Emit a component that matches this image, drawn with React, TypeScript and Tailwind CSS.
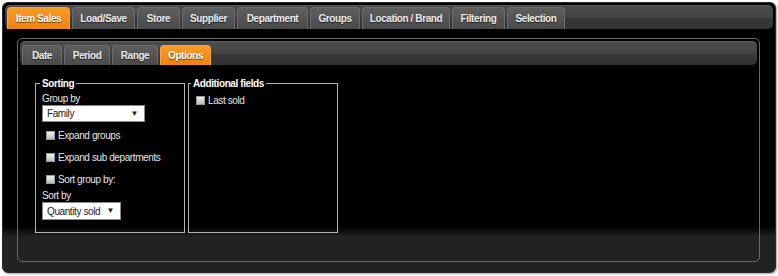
import React from 'react';

const mainTabs = [
  { label: 'Item Sales', w: 'w-[63px]', active: true },
  { label: 'Load/Save', w: 'w-[63px]' },
  { label: 'Store', w: 'w-[43px]' },
  { label: 'Supplier', w: 'w-[53px]' },
  { label: 'Department', w: 'w-[71px]' },
  { label: 'Groups', w: 'w-[50px]' },
  { label: 'Location / Brand', w: 'w-[88px]' },
  { label: 'Filtering', w: 'w-[53px]' },
  { label: 'Selection', w: 'w-[58px]' },
];

const subTabs = [
  { label: 'Date', w: 'w-[40px]' },
  { label: 'Period', w: 'w-[46px]' },
  { label: 'Range', w: 'w-[46px]' },
  { label: 'Options', w: 'w-[51px]', active: true },
];

function Tab({ label, w, active, h }: { label: string; w: string; active?: boolean; h: string }) {
  const look = active
    ? 'bg-[linear-gradient(to_bottom,#fa9a26,#ef8410)] border-[#f6a445] text-white'
    : 'bg-[linear-gradient(to_bottom,#5e5e5e,#4a4a4a)] border-[#6c6c6c] text-[#ececec]';
  return (
    <div
      className={`${w} ${h} ${look} flex items-center justify-center rounded-t-[4px] border border-b-0 text-[10px] font-bold tracking-[-0.4px] [text-shadow:0_1px_1px_rgba(0,0,0,0.6)]`}
    >
      {label}
    </div>
  );
}

function Check({ label }: { label: string }) {
  return (
    <div className="flex items-center h-[22px] pl-[4px]">
      <span className="w-[9px] h-[9px] bg-[linear-gradient(to_bottom,#f0f0f0,#bdbdbd)] border border-[#9a9a9a] mr-[3px]" />
      <span className="text-[#e6e6e6]">{label}</span>
    </div>
  );
}

function Select({ value, w }: { value: string; w: string }) {
  return (
    <div className={`${w} h-[17px] bg-white border border-[#8a8a8a] flex items-center justify-between pl-[4px] pr-[6px] text-[#222]`}>
      <span>{value}</span>
      <span className="text-[8px]">▼</span>
    </div>
  );
}

export default function App() {
  return (
    <div className="bg-white w-[778px] h-[276px] p-[2px] font-['Liberation_Sans',Arial,sans-serif] text-[10px] tracking-[-0.4px]">
      <div className="w-[774px] h-[271px] rounded-[6px] border border-[#2a2a2a] shadow-[1px_1px_2px_rgba(0,0,0,0.35)] bg-[linear-gradient(to_bottom,#000_0%,#000_83%,#222_87%,#222_100%)] pt-[2px] px-[2px] flex flex-col">
        <div className="h-[24px] rounded-[5px] border-t border-[#5a5a5a] bg-[linear-gradient(to_bottom,#4c4c4c_0%,#444_50%,#383838_51%,#333_100%)] flex items-end pl-[2px] gap-[2px]">
          {mainTabs.map((t) => (
            <Tab key={t.label} {...t} h="h-[22px]" />
          ))}
        </div>

        <div className="mt-[9px] ml-[12px] mr-[13px] h-[224px] rounded-[5px] border border-[#6a6a6a] p-[2px] flex flex-col">
          <div className="h-[24px] rounded-[5px] border-t border-[#5c5c5c] bg-[linear-gradient(to_bottom,#4c4c4c_0%,#444_50%,#383838_51%,#333_100%)] flex items-end pl-[2px] gap-[2px]">
            {subTabs.map((t) => (
              <Tab key={t.label} {...t} h="h-[20px]" />
            ))}
          </div>

          <div className="flex gap-[3px] pt-[11px] pl-[15px]">
            <fieldset className="w-[150px] h-[157px] border border-[#b4b4b4] pl-[6px]">
              <legend className="ml-[-2px] px-[2px] font-bold text-white">Sorting</legend>
              <div className="text-[#e6e6e6] mt-[2px] leading-[12px]">Group by</div>
              <Select value="Family" w="w-[103px]" />
              <div className="mt-[2px]">
                <Check label="Expand groups" />
                <Check label="Expand sub departments" />
                <Check label="Sort group by:" />
              </div>
              <div className="text-[#e6e6e6] leading-[12px]">Sort by</div>
              <div className="h-[18px]">
                <Select value="Quantity sold" w="w-[79px] h-[18px]" />
              </div>
            </fieldset>
            <fieldset className="w-[150px] h-[157px] border border-[#b4b4b4] pl-[4px]">
              <legend className="ml-[-2px] px-[2px] font-bold text-white">Additional fields</legend>
              <div className="flex items-center mt-[2px] pl-[3px]">
                <span className="w-[9px] h-[9px] bg-[linear-gradient(to_bottom,#f0f0f0,#bdbdbd)] border border-[#9a9a9a] mr-[3px]" />
                <span className="text-[#e6e6e6]">Last sold</span>
              </div>
            </fieldset>
          </div>
        </div>
      </div>
    </div>
  );
}
